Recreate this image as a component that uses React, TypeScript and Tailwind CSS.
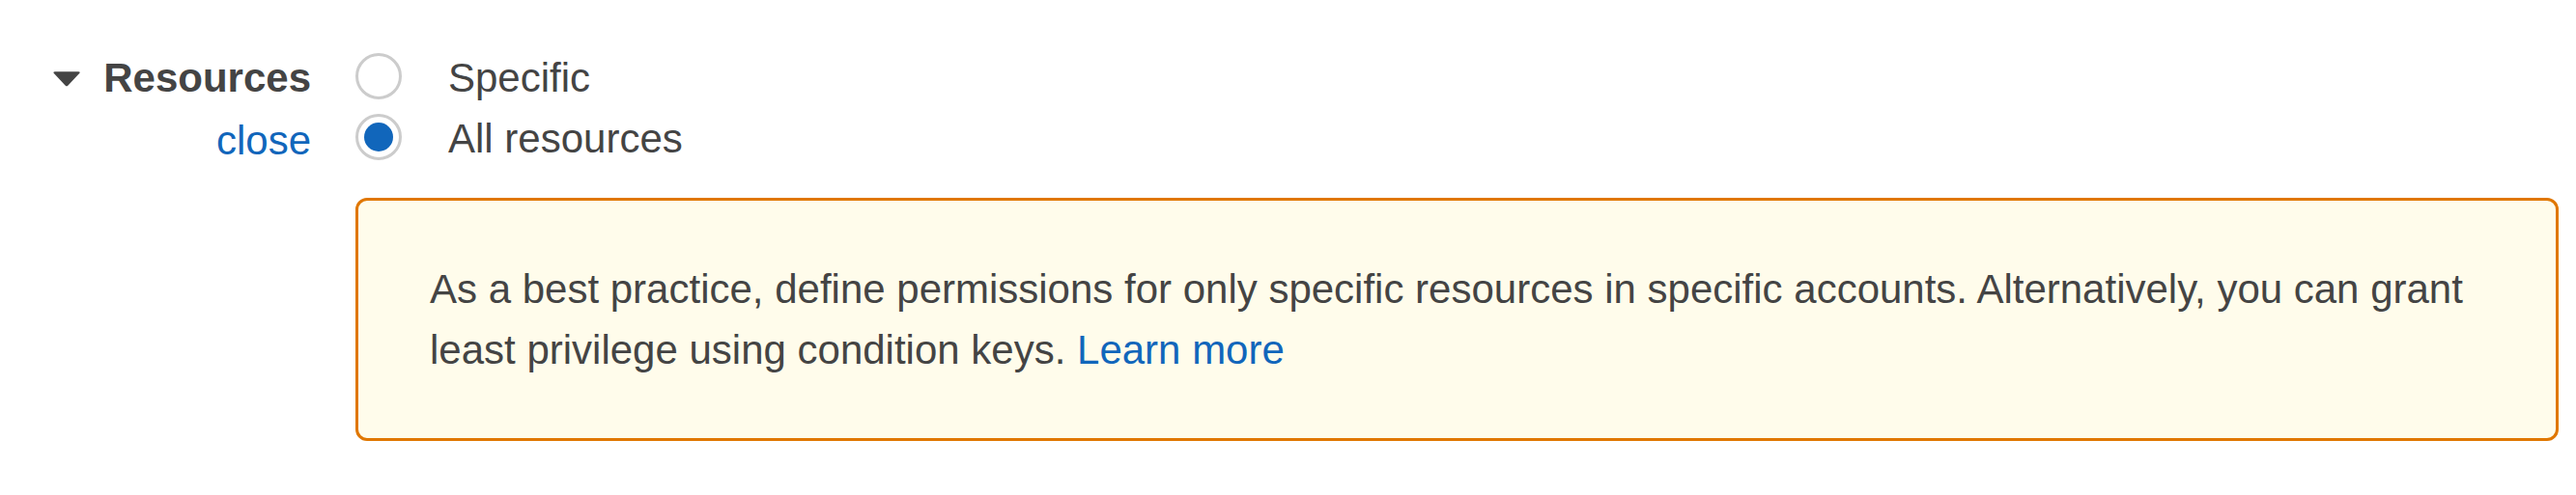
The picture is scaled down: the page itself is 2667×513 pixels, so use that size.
import { useState } from "react";

const options = ["Specific", "All resources"];

export default function App() {
  const [selected, setSelected] = useState("All resources");
  const [open, setOpen] = useState(true);

  return (
    <main className="flex gap-[46px] bg-white pt-[49px] pr-[18px] pb-14 pl-[54px] font-['Liberation_Sans',Arial,sans-serif] text-[42px] leading-[63px] text-[#444444]">
      <div className="flex w-[268px] shrink-0 flex-col items-end gap-0.5">
        <button
          type="button"
          aria-expanded={open}
          onClick={() => setOpen(!open)}
          className="flex w-full items-center justify-between font-bold"
        >
          <svg viewBox="0 0 30 18" className="h-[18px] w-[30px]" fill="currentColor" aria-hidden="true">
            <path d="M3 2.3H27.2Q29.6 2.3 28.2 4L16.5 16.6Q15 18.2 13.5 16.6L1.8 4Q.6 2.3 3 2.3Z" />
          </svg>
          Resources
        </button>
        <a href="#close" className="text-[#1166bb]">
          close
        </a>
      </div>

      <div className="min-w-0 flex-1">
        <div role="radiogroup" aria-label="Resources">
          {options.map((option) => (
            <label key={option} className="flex w-fit items-start gap-12">
              <input
                type="radio"
                name="resources"
                checked={selected === option}
                onChange={() => setSelected(option)}
                className="mt-1.5 grid size-12 shrink-0 appearance-none place-items-center rounded-full border-3 border-[#cccccc] bg-white before:size-[30px] before:rounded-full checked:before:bg-[#1166bb]"
              />
              {option}
            </label>
          ))}
        </div>
        <div className="mt-[30px] rounded-xl border-3 border-[#e07700] bg-[#fffceb] py-[60px] pr-[72px] pl-[74px]">
          <p>
            As a best practice, define permissions for only specific resources in specific accounts. Alternatively, you can
            grant least privilege using condition keys.{" "}
            <a href="#learn-more" className="text-[#1166bb]">
              Learn more
            </a>
          </p>
        </div>
      </div>
    </main>
  );
}
